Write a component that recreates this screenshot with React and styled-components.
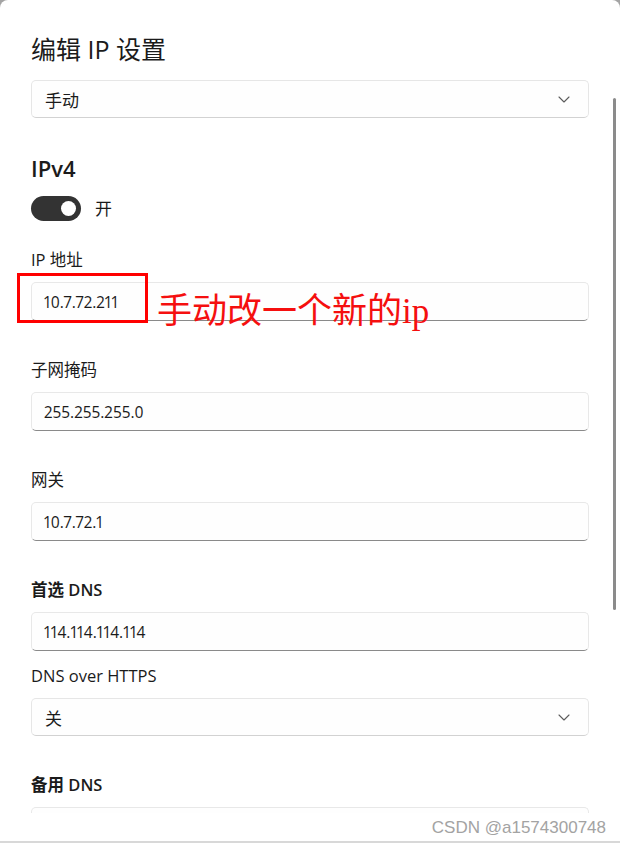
import React from "react";
import styled, { createGlobalStyle } from "styled-components";

const fields = [
  { label: "IP 地址", value: "10.7.72.211", note: true },
  { label: "子网掩码", value: "255.255.255.0" },
  { label: "网关", value: "10.7.72.1" },
  { label: "首选 DNS", value: "114.114.114.114", bold: true },
  { label: "DNS over HTTPS", value: "关", select: true, tight: true },
  { label: "备用 DNS", value: "", bold: true },
];

function Chevron() {
  return (
    <svg width="12" height="7" viewBox="0 0 12 7" fill="none">
      <path d="M1 1l5 5 5-5" stroke="#5c5c5c" strokeWidth="1.1" strokeLinecap="round" strokeLinejoin="round" />
    </svg>
  );
}

function App() {
  return (
    <>
      <GlobalStyle />
      <Dialog>
        <Viewport>
          <Content>
            <Title>编辑 IP 设置</Title>
            <Select>
              <span>手动</span>
              <Chevron />
            </Select>

            <SectionTitle>IPv4</SectionTitle>
            <ToggleRow>
              <Toggle>
                <Thumb />
              </Toggle>
              <ToggleText>开</ToggleText>
            </ToggleRow>

            {fields.map((f) => (
              <Field key={f.label} $tight={f.tight}>
                <Label $bold={f.bold}>{f.label}</Label>
                {f.select ? (
                  <Select>
                    <span>{f.value}</span>
                    <Chevron />
                  </Select>
                ) : (
                  <InputWrap>
                    <Input>{f.value}</Input>
                    {f.note && (
                      <>
                        <RedBox />
                        <RedNote>手动改一个新的ip</RedNote>
                      </>
                    )}
                  </InputWrap>
                )}
              </Field>
            ))}
          </Content>
        </Viewport>
        <Scrollbar />
        <Watermark>CSDN @a1574300748</Watermark>
      </Dialog>
    </>
  );
}

export default App;

const GlobalStyle = createGlobalStyle`
  html, body {
    margin: 0;
    padding: 0;
    background: #a4a4a4;
  }
  body {
    font-family: "Open Sans", "Noto Sans CJK SC", sans-serif;
    color: #1b1b1b;
  }
`;

const Dialog = styled.div`
  position: relative;
  width: 620px;
  height: 843px;
  box-sizing: border-box;
  background: #ffffff;
  border-radius: 8px 8px 0 0;
  border-bottom: 2px solid #d8d8d8;
  overflow: hidden;
`;

const Viewport = styled.div`
  height: 813px;
  overflow: hidden;
`;

const Content = styled.div`
  display: flex;
  flex-direction: column;
  padding: 33px 31px 0 31px;
`;

const Title = styled.h1`
  margin: 0;
  font-size: 25px;
  line-height: 32px;
  font-weight: 400;
`;

const Select = styled.div`
  height: 38px;
  box-sizing: border-box;
  display: flex;
  align-items: center;
  justify-content: space-between;
  padding: 0 18px 0 13px;
  border: 1px solid #e6e6e6;
  border-bottom-color: #d2d2d2;
  border-radius: 5px;
  background: #fefefe;
  font-size: 17px;

  ${Title} + & {
    margin-top: 15px;
  }
`;

const SectionTitle = styled.h2`
  margin: 35px 0 0 0;
  font-size: 22px;
  line-height: 30px;
  font-weight: 600;
`;

const ToggleRow = styled.div`
  margin-top: 13px;
  display: flex;
  align-items: center;
  gap: 14px;
`;

const Toggle = styled.div`
  width: 50px;
  height: 25px;
  border-radius: 13px;
  background: #333333;
  display: flex;
  align-items: center;
  justify-content: flex-end;
  padding-right: 5px;
  box-sizing: border-box;
`;

const Thumb = styled.div`
  width: 15px;
  height: 15px;
  border-radius: 50%;
  background: #ffffff;
`;

const ToggleText = styled.span`
  font-size: 17px;
  line-height: 25px;
`;

const Field = styled.div`
  display: flex;
  flex-direction: column;
  gap: 11px;
  margin-top: ${(p) => (p.$tight ? "14px" : "38px")};

  ${ToggleRow} + & {
    margin-top: 28px;
  }
`;

const Label = styled.div`
  font-size: 16.5px;
  line-height: 22px;
  font-weight: ${(p) => (p.$bold ? 600 : 400)};
`;

const InputWrap = styled.div`
  position: relative;
`;

const Input = styled.div`
  height: 39px;
  box-sizing: border-box;
  display: flex;
  align-items: center;
  padding-left: 12px;
  border: 1px solid #e8e8e8;
  border-bottom: 1px solid #8a8a8a;
  border-radius: 5px;
  background: #fefefe;
  font-size: 15.5px;
  font-variant-numeric: proportional-nums;
`;

const RedBox = styled.div`
  position: absolute;
  left: -14px;
  top: -9px;
  width: 131px;
  height: 50px;
  box-sizing: border-box;
  border: 3px solid #ff0000;
`;

const RedNote = styled.div`
  position: absolute;
  left: 126px;
  top: 12px;
  font-family: "Liberation Serif", "Noto Sans CJK SC", serif;
  font-size: 35px;
  line-height: 35px;
  font-weight: 400;
  color: #f50f0f;
  white-space: nowrap;
`;

const Scrollbar = styled.div`
  position: absolute;
  top: 98px;
  right: 4px;
  width: 3px;
  height: 512px;
  border-radius: 2px;
  background: #8b8b8b;
`;

const Watermark = styled.div`
  position: absolute;
  right: 14px;
  bottom: 3px;
  font-family: "Liberation Sans", sans-serif;
  font-size: 17px;
  line-height: 20px;
  color: #a3a3a3;
`;
